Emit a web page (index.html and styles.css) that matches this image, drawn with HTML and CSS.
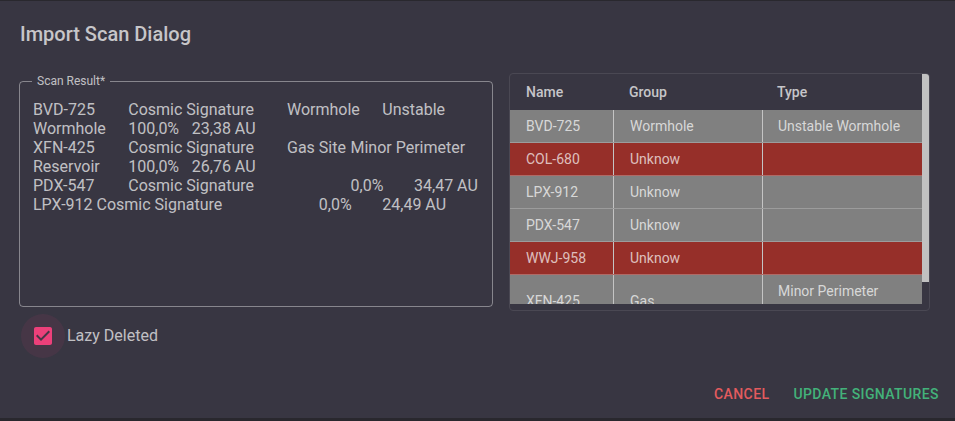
FILE: index.html
```html
<!DOCTYPE html>
<html>
<head>
<meta charset="utf-8">
<link rel="stylesheet" href="styles.css">
</head>
<body>
<div class="dialog">
  <h2 class="title">Import Scan Dialog</h2>
  <div class="content">
    <div class="left">
      <fieldset class="scan-field">
        <legend>Scan Result*</legend>
        <div class="scan-text">BVD-725&#9;Cosmic Signature&#9;Wormhole&#9;Unstable Wormhole&#9;100,0%&#9;23,38 AU
XFN-425&#9;Cosmic Signature&#9;Gas Site&#9;Minor Perimeter Reservoir&#9;100,0%&#9;26,76 AU
PDX-547&#9;&#9;Cosmic Signature&#9;&#9;&#9;0,0%&#9;34,47 AU
LPX-912&#9;Cosmic Signature&#9;&#9;&#9;0,0%&#9;24,49 AU</div>
      </fieldset>
      <label class="check-row">
        <span class="check-halo">
          <svg width="24" height="24" viewBox="0 0 24 24"><path fill="#ec407a" fill-rule="evenodd" d="M19 3H5c-1.11 0-2 .9-2 2v14c0 1.1.89 2 2 2h14c1.11 0 2-.9 2-2V5c0-1.1-.89-2-2-2zm-9 14l-5-5 1.41-1.41L10 14.170l7.59-7.59L19 8l-9 9z"/></svg>
        </span>
        <span class="check-label">Lazy Deleted</span>
      </label>
    </div>
    <div class="table-box">
      <div class="table-scroll">
        <div class="table-clip">
          <div class="row head">
            <div class="cell">Name</div>
            <div class="cell">Group</div>
            <div class="cell">Type</div>
          </div>
          <div class="row gray">
            <div class="cell">BVD-725</div>
            <div class="cell sep">Wormhole</div>
            <div class="cell sep">Unstable Wormhole</div>
          </div>
          <div class="row red">
            <div class="cell">COL-680</div>
            <div class="cell sep">Unknow</div>
            <div class="cell sep"></div>
          </div>
          <div class="row gray">
            <div class="cell">LPX-912</div>
            <div class="cell sep">Unknow</div>
            <div class="cell sep"></div>
          </div>
          <div class="row gray">
            <div class="cell">PDX-547</div>
            <div class="cell sep">Unknow</div>
            <div class="cell sep"></div>
          </div>
          <div class="row red">
            <div class="cell">WWJ-958</div>
            <div class="cell sep">Unknow</div>
            <div class="cell sep"></div>
          </div>
          <div class="row gray">
            <div class="cell">XFN-425</div>
            <div class="cell sep">Gas</div>
            <div class="cell sep">Minor Perimeter Reservoir</div>
          </div>
        </div>
        <div class="scrollbar"><div class="thumb"></div></div>
      </div>
      <div class="h-track"></div>
    </div>
  </div>
  <div class="actions">
    <button class="btn cancel">Cancel</button>
    <button class="btn update">Update Signatures</button>
  </div>
</div>
</body>
</html>
```

FILE: styles.css
```css
html, body {
  margin: 0;
  padding: 0;
}
body {
  background: #29282e;
  font-family: Roboto, "Liberation Sans", sans-serif;
  width: 955px;
  height: 421px;
  overflow: hidden;
}
.dialog {
  margin-top: 1px;
  height: 417px;
  background: #383642;
  color: rgba(255, 255, 255, 0.7);
  display: flex;
  flex-direction: column;
}
.title {
  margin: 0;
  padding: 17px 20px 0;
  font-size: 20px;
  font-weight: 500;
  line-height: 32px;
  color: rgba(255, 255, 255, 0.72);
}
.content {
  display: flex;
  align-items: flex-start;
  gap: 16px;
  margin-top: 23px;
  padding-left: 19px;
}
.left {
  display: flex;
  flex-direction: column;
  padding-top: 1px;
}
.scan-field {
  box-sizing: border-box;
  width: 474px;
  margin: 0;
  padding: 0 14px 0 13px;
  border: 1px solid rgba(255, 255, 255, 0.4);
  border-radius: 4px;
  min-width: 0;
}
.scan-field legend {
  margin-left: -1px;
  padding: 0 5px;
  font-size: 12px;
  line-height: 14px;
  color: rgba(255, 255, 255, 0.7);
}
.scan-text {
  box-sizing: border-box;
  height: 218px;
  padding-top: 12px;
  font-size: 16px;
  line-height: 19px;
  white-space: pre-wrap;
  tab-size: 8;
  color: rgba(255, 255, 255, 0.7);
}
.check-row {
  display: flex;
  align-items: center;
  margin-top: 7px;
  margin-left: 2px;
}
.check-halo {
  width: 44px;
  height: 44px;
  border-radius: 50%;
  background: rgba(236, 64, 122, 0.08);
  display: flex;
  align-items: center;
  justify-content: center;
}
.check-halo svg {
  display: block;
}
.check-label {
  margin-left: 2px;
  font-size: 16px;
  line-height: 24px;
  color: rgba(255, 255, 255, 0.7);
}
.table-box {
  box-sizing: border-box;
  width: 421px;
  height: 238px;
  border: 1px solid #4a4853;
  border-radius: 4px;
  display: flex;
  flex-direction: column;
  overflow: hidden;
}
.table-scroll {
  display: flex;
  height: 230px;
}
.table-clip {
  width: 412px;
  overflow: hidden;
}
.scrollbar {
  width: 7px;
}
.thumb {
  height: 208px;
  background: #c1c1c1;
}
.h-track {
  height: 6px;
}
.row {
  display: grid;
  grid-template-columns: 103px 149px 160px;
  font-size: 14px;
  line-height: 20px;
  color: rgba(255, 255, 255, 0.7);
}
.row.head {
  height: 36px;
  font-weight: 500;
  color: rgba(255, 255, 255, 0.72);
}
.row.head .cell {
  padding-top: 0;
  padding-bottom: 0;
}
.row.gray {
  background: #808080;
  border-bottom: 1px solid #9c9c9c;
}
.row.red {
  background: #962f29;
  border-bottom: 1px solid #b06a66;
}
.cell {
  box-sizing: border-box;
  display: flex;
  align-items: center;
  padding: 6px 12px 6px 16px;
}
.cell:nth-child(3) {
  padding-left: 15px;
}
.cell.sep {
  border-left: 1px solid #c4c4c4;
}
.actions {
  display: flex;
  justify-content: flex-end;
  gap: 8px;
  margin-top: auto;
  padding: 0 8px 6px;
}
.btn {
  background: none;
  border: none;
  padding: 6px 8px;
  font-family: Roboto, "Liberation Sans", sans-serif;
  font-size: 14px;
  font-weight: 500;
  line-height: 24px;
  letter-spacing: 0.4px;
  text-transform: uppercase;
}
.btn.cancel {
  color: #e35b5e;
}
.btn.update {
  color: #43b27a;
}
```
